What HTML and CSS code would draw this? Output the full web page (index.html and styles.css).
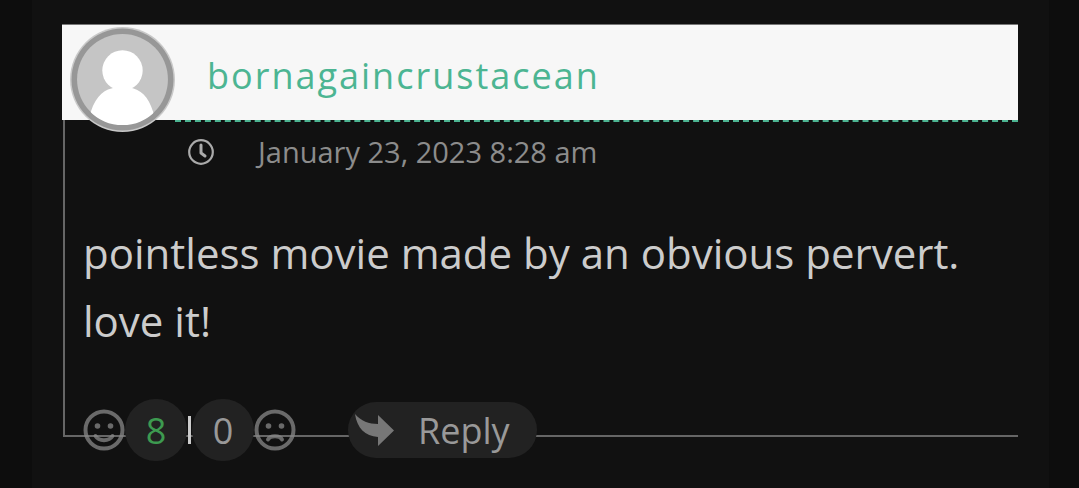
FILE: index.html
```
<!DOCTYPE html>
<html lang="en">
<head>
<title>Comments</title>
<meta charset="utf-8">
<meta name="viewport" content="width=device-width,initial-scale=1">
<link rel="stylesheet" href="styles.css">
</head>
<body>
<main class="page">
<article class="comment">
<header class="comment_head">
<svg class="avatar" viewBox="0 0 104 104" aria-hidden="true">
<defs><clipPath id="face"><circle cx="52" cy="52" r="46"/></clipPath></defs>
<circle cx="52" cy="52" r="52" fill="#c9c9c9"/>
<circle cx="52" cy="52" r="50.500" fill="#979797"/>
<circle cx="52" cy="52" r="45" fill="#c5c5c5"/>
<g clip-path="url(#face)" fill="#fff">
<circle cx="52" cy="43" r="20"/>
<path d="M19 90C23 72 32 63 41 61C47 59 57 59 63 61C73 64 80 73 84 90V97H19Z"/>
</g>
<path d="M19 83A45 45 0 0 0 85 83L88 86A50 50 0 0 1 16 86Z" fill="#979797"/>
</svg>
<a class="author" href="#">bornagaincrustacean</a>
</header>
<div class="comment_body">
<div class="date">
<svg class="clock" viewBox="0 0 26 26" fill="none" stroke="#aaa" aria-hidden="true"><circle cx="13" cy="13" r="11.800" stroke-width="2.200"/><path d="M13 6V14L17 17" stroke-width="3" stroke-linecap="round" stroke-linejoin="round"/></svg>
<time datetime="2023-01-23T08:28">January 23, 2023 8:28 am</time>
</div>
<p class="text">pointless movie made by an obvious pervert. love it!</p>
</div>
<footer class="comment_foot">
<button class="vote" type="button" aria-label="Like">
<svg viewBox="0 0 42 42" fill="none" stroke="#888" aria-hidden="true"><circle cx="21" cy="21" r="18.500" stroke-width="4"/><path d="M12.500 27C16 32.500 26 32.500 29.500 27" stroke-width="4" stroke-linecap="round"/><g fill="#888" stroke="none"><circle cx="14.500" cy="17" r="2.800"/><circle cx="27.500" cy="17" r="2.800"/></g></svg>
</button>
<span class="count likes">8</span>
<span class="divider"></span>
<span class="count">0</span>
<button class="vote" type="button" aria-label="Dislike">
<svg viewBox="0 0 42 42" fill="none" stroke="#888" aria-hidden="true"><circle cx="21" cy="21" r="18.500" stroke-width="4"/><path d="M14 30.500C16 26 26 26 28 30.500" stroke-width="4" stroke-linecap="round"/><g fill="#888" stroke="none"><circle cx="14.500" cy="17" r="2.800"/><circle cx="27.500" cy="17" r="2.800"/></g></svg>
</button>
<button class="reply" type="button">
<svg class="arrow" viewBox="0 0 40 34" fill="#777" aria-hidden="true"><path d="M1 1C7 8 15 11 24 11V2L40 17.500L24 33V24C11 23 3 15 1 1Z"/></svg>
Reply
</button>
</footer>
</article>
</main>
</body>
</html>
```
FILE: styles.css
```
*{box-sizing: border-box;}
body{margin: 0;background-color: #0d0d0d;font-family: "Open Sans", "Noto Sans", sans-serif;}
.page{min-height: 100vh;margin: 0 30px 0 32px;padding: 24px 31px 24px 30px;background-color: #111;}
.comment_head{display: flex;height: 96px;padding-left: 8px;background-color: #f7f7f7;border-top: 1px solid #777;}
.avatar{flex: none;width: 105px;height: 105px;margin-top: 2px;position: relative;}
.author{flex: 1;margin-bottom: -2px;padding-left: 32px;border-bottom: 2px dashed #4cb592;color: #4cb592;font-size: 36px;line-height: 102px;letter-spacing: 2px;text-decoration: none;}
.comment_body{margin-left: 1px;padding: 11px 20px 80px 18px;border-left: 2px solid #666;border-bottom: 2px solid #666;}
.date{display: flex;align-items: center;gap: 44px;padding-left: 105px;color: #8c8c8c;font-size: 29px;line-height: 42px;}
.clock{width: 26px;height: 26px;}
.text{margin: 46px 0 0;color: #ccc;font-size: 42px;line-height: 68px;}
.comment_foot{display: flex;align-items: center;margin-top: -38px;padding-left: 21px;position: relative;}
button{border: none;padding: 0;background: none;font-family: inherit;cursor: pointer;}
.vote{width: 42px;height: 42px;opacity: 0.75;}
.vote svg{display: block;}
.count{width: 62px;height: 62px;border-radius: 50%;background-color: #222;color: #999;font-size: 36px;line-height: 64px;text-align: center;}
.likes{color: #3d9a50;}
.divider{width: 3px;height: 28px;margin: 0 1px;background-color: #ccc;}
.reply{display: flex;align-items: center;gap: 24px;height: 56px;margin-left: 52px;padding: 0 27px 0 6px;border-radius: 28px;background-color: #222;color: #999;font-size: 36px;}
.arrow{width: 40px;height: 34px;}
```
